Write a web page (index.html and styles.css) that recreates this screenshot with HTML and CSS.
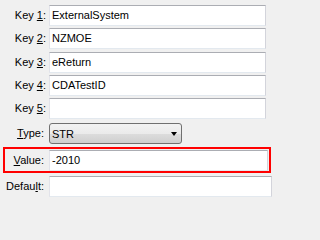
FILE: index.html
```html
<!DOCTYPE html>
<html>
<head>
<meta charset="utf-8">
<link rel="stylesheet" href="styles.css">
</head>
<body>
<div class="form">
  <div class="row r1"><span class="label">Key <u>1</u>:</span><div class="field key">ExternalSystem</div></div>
  <div class="row r2"><span class="label">Key <u>2</u>:</span><div class="field key">NZMOE</div></div>
  <div class="row r3"><span class="label">Key <u>3</u>:</span><div class="field key">eReturn</div></div>
  <div class="row r4"><span class="label">Key <u>4</u>:</span><div class="field key">CDATestID</div></div>
  <div class="row r5"><span class="label">Key <u>5</u>:</span><div class="field key"></div></div>
  <div class="row r6"><span class="label short"><u>T</u>ype:</span><div class="select"><span>STR</span><span class="arrow"></span></div></div>
  <div class="highlight">
    <span class="label inner short"><u>V</u>alue:</span><div class="field value">-2010</div>
  </div>
  <div class="row r8"><span class="label short">Defau<u>l</u>t:</span><div class="field wide"></div></div>
</div>
</body>
</html>
```
FILE: styles.css
```css
html, body {
  margin: 0;
  padding: 0;
  background: #f0f0f0;
}
body {
  width: 272px;
  height: 201px;
  overflow: hidden;
  font-family: "Liberation Sans", Arial, sans-serif;
  font-size: 11px;
  color: #000;
}
.form {
  display: flex;
  flex-direction: column;
  padding-top: 5px;
}
.row {
  display: flex;
  align-items: center;
  height: 21px;
}
.r2 { margin-top: 2px; }
.r3 { margin-top: 3px; }
.r4 { margin-top: 2px; }
.r5 { margin-top: 2px; }
.r6 { margin-top: 4px; }
.r8 { margin-top: 3px; }
.label {
  flex: none;
  width: 46px;
  text-align: right;
  line-height: 21px;
}
.label.short {
  width: 44px;
  padding-right: 2px;
}
.label.inner {
  width: 39px;
}
.label u {
  text-decoration-thickness: 1px;
  text-underline-offset: 1px;
}
.field {
  box-sizing: border-box;
  height: 21px;
  margin-left: 3px;
  background: #fff;
  border: 1px solid #e2e3ea;
  border-top-color: #abadb3;
  border-right-color: #d3d4db;
  border-bottom-color: #e3e9ef;
  padding-left: 2px;
  line-height: 19px;
  white-space: nowrap;
  overflow: hidden;
}
.field.key { width: 217px; }
.field.value { width: 219px; }
.field.wide { width: 223px; }
.select {
  box-sizing: border-box;
  width: 133px;
  height: 21px;
  margin-left: 3px;
  border: 1px solid #707070;
  border-radius: 3px;
  background: linear-gradient(to bottom, #f2f2f2 0%, #ebebeb 50%, #dddddd 51%, #cfcfcf 100%);
  display: flex;
  align-items: center;
  justify-content: space-between;
  padding: 0 4px 0 2px;
}
.arrow {
  width: 0;
  height: 0;
  border-left: 3.5px solid transparent;
  border-right: 3.5px solid transparent;
  border-top: 4px solid #000;
}
.highlight {
  box-sizing: border-box;
  margin-top: 3px;
  margin-left: 3px;
  width: 268px;
  height: 26px;
  border: 2px solid #ff0000;
  padding-top: 1px;
  display: flex;
  align-items: flex-start;
}
.highlight .label {
  line-height: 21px;
}
```
